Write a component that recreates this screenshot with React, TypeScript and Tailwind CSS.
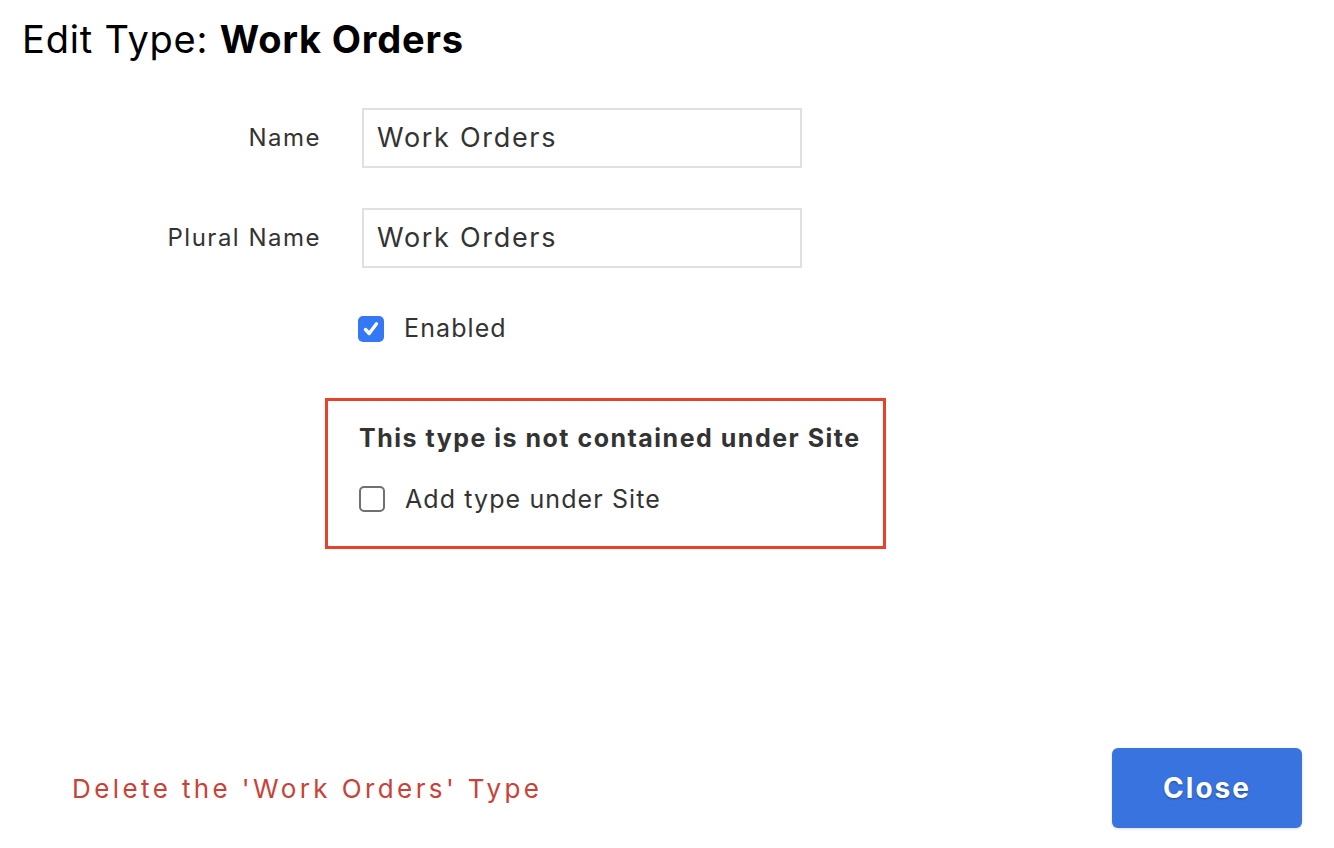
import React from "react";

function CheckBox({ checked }: { checked: boolean }) {
  if (checked) {
    return (
      <span className="flex h-[26px] w-[26px] shrink-0 items-center justify-center rounded-[5px] bg-[#3478f6]">
        <svg width="20" height="20" viewBox="0 0 20 20" fill="none">
          <path d="M4.5 10.5 L8.2 14.5 L15.5 4.8" stroke="white" strokeWidth="3.4" strokeLinecap="round" strokeLinejoin="round" />
        </svg>
      </span>
    );
  }
  return <span className="block h-[26px] w-[26px] shrink-0 rounded-[5px] border-2 border-[#707070] bg-white" />;
}

export default function App() {
  return (
    <div className="flex h-[848px] w-[1334px] flex-col bg-white font-['Inter',sans-serif] text-[#333]">
      <h1 className="pl-[22px] pt-[15px] text-[38px] leading-[48px] tracking-[0.8px] text-black">
        Edit Type: <span className="font-bold">Work Orders</span>
      </h1>

      <div className="mt-[45px] flex flex-col">
        <div className="flex items-center">
          <div className="w-[321px] text-right text-[24px] tracking-[1.5px]">Name</div>
          <div className="ml-[41px] flex h-[60px] w-[440px] items-center border-2 border-[#e0e0e0] px-[13px] text-[27px] tracking-[1.7px] text-[#333]">
            Work Orders
          </div>
        </div>
        <div className="mt-[40px] flex items-center">
          <div className="w-[321px] text-right text-[24px] tracking-[1.5px]">Plural Name</div>
          <div className="ml-[41px] flex h-[60px] w-[440px] items-center border-2 border-[#e0e0e0] px-[13px] text-[27px] tracking-[1.7px] text-[#333]">
            Work Orders
          </div>
        </div>
        <div className="ml-[358px] mt-[42px] flex items-center gap-[20px]">
          <CheckBox checked />
          <span className="text-[25px] tracking-[1.1px]">Enabled</span>
        </div>
        <div className="ml-[325px] mt-[50px] w-[561px] border-[3px] border-[#e5432b] pb-[28px] pl-[31px] pt-[21px]">
          <div className="text-[25px] font-bold leading-[32px] tracking-[1.5px]">This type is not contained under Site</div>
          <div className="mt-[27px] flex items-center gap-[20px]">
            <CheckBox checked={false} />
            <span className="text-[25px] tracking-[1.1px]">Add type under Site</span>
          </div>
        </div>
      </div>

      <div className="mt-auto flex items-center justify-between pb-[20px] pl-[72px] pr-[32px]">
        <span className="text-[26px] tracking-[3.4px] text-[#c94238]">Delete the 'Work Orders' Type</span>
        <button className="h-[80px] w-[190px] rounded-[6px] bg-[#3873e0] text-[28px] font-bold tracking-[2px] text-white shadow-[0_1px_3px_rgba(0,0,0,0.15)] [text-shadow:0_1px_2px_rgba(0,0,0,0.35)]">
          Close
        </button>
      </div>
    </div>
  );
}
